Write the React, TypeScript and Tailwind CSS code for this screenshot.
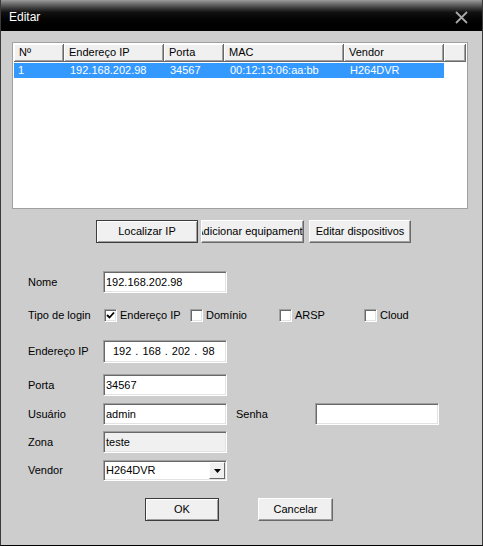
import type { FC, ReactNode } from 'react';

const font = { fontFamily: '"Liberation Sans", Arial, sans-serif' };

const sunken =
    'border border-t-[#a0a0a0] border-l-[#a0a0a0] border-r-white border-b-white shadow-[inset_1px_1px_0_#696969,inset_-1px_-1px_0_#e3e3e3]';

type ButtonProps = { label: string; w: string; focused?: boolean };

const Button: FC<ButtonProps> = ({ label, w, focused }) => (
    <div
        className={`flex h-[23px] ${w} items-center justify-center overflow-hidden bg-[#f0f0f0] text-[11px] text-black ${
            focused
                ? 'border border-[#3c3c3c] shadow-[inset_1px_1px_0_white,inset_-1px_-1px_0_#a0a0a0]'
                : 'border border-t-white border-l-white border-r-[#696969] border-b-[#696969] shadow-[inset_-1px_-1px_0_#a0a0a0]'
        }`}
    >
        <span className="shrink-0 whitespace-nowrap">{label}</span>
    </div>
);

const Field: FC<{ value?: string; w?: string; gray?: boolean; children?: ReactNode }> = ({
    value,
    w = 'w-[124px]',
    gray,
    children,
}) => (
    <div
        className={`flex h-full ${w} items-center pl-[2px] text-[11px] text-black ${sunken} ${
            gray ? 'bg-[#f0f0f0]' : 'bg-white'
        }`}
    >
        {children ?? value}
    </div>
);

const Check: FC<{ label: string; checked?: boolean; w: string }> = ({ label, checked, w }) => (
    <div className={`flex ${w} items-center gap-[3px]`}>
        <div className={`flex h-[13px] w-[13px] items-center justify-center bg-white ${sunken}`}>
            {checked && (
                <svg width="9" height="9" viewBox="0 0 9 9">
                    <path d="M1 4 L3.5 6.5 L8 1.5" stroke="#000" strokeWidth="1.8" fill="none" />
                </svg>
            )}
        </div>
        <span className="text-[11px]">{label}</span>
    </div>
);

const Row: FC<{ label: string; h: string; mt: string; children: ReactNode }> = ({
    label,
    h,
    mt,
    children,
}) => (
    <div className={`flex ${h} ${mt} items-center`}>
        <span className="w-[76px] pl-px text-[11px]">{label}</span>
        {children}
    </div>
);

const cols = [
    { title: 'Nº', w: 'w-[50px]', value: '1' },
    { title: 'Endereço IP', w: 'w-[100px]', value: '192.168.202.98' },
    { title: 'Porta', w: 'w-[60px]', value: '34567' },
    { title: 'MAC', w: 'w-[120px]', value: '00:12:13:06:aa:bb' },
    { title: 'Vendor', w: 'w-[100px]', value: 'H264DVR' },
];

export default function App() {
    return (
        <div
            className="flex h-[546px] w-[483px] flex-col overflow-hidden border-x border-b border-x-[#3a3a3a] border-b-black bg-[#cdcdcd] text-black"
            style={font}
        >
            <div className="flex h-[31px] shrink-0 items-center justify-between bg-gradient-to-b from-[#9c9c9c] via-[#111] via-[40%] to-black pl-[8px] pr-[14px] pt-[3px]">
                <span className="text-[12px] text-white">Editar</span>
                <svg width="13" height="13" viewBox="0 0 13 13">
                    <path d="M1 1 L12 12 M12 1 L1 12" stroke="#a8a8a8" strokeWidth="1.8" />
                </svg>
            </div>

            <div className="ml-[11px] mt-[11px] h-[167px] w-[456px] border border-[#a0a0a0] bg-white p-px">
                <div className="flex h-[18px]">
                    {cols.map((c) => (
                        <div
                            key={c.title}
                            className={`${c.w} flex items-center border-r border-b border-[#696969] bg-[#f0f0f0] pl-[5px] text-[11px] shadow-[inset_1px_1px_0_white,inset_-1px_-1px_0_#a0a0a0]`}
                        >
                            {c.title}
                        </div>
                    ))}
                    <div className="flex-1 border-r border-b border-[#696969] bg-[#f0f0f0] shadow-[inset_1px_1px_0_white,inset_-1px_-1px_0_#a0a0a0]" />
                </div>
                <div className="mt-px flex h-[15px] w-[430px] bg-[#3399ff] text-white">
                    {cols.map((c) => (
                        <div key={c.title} className={`${c.w} flex items-center pl-[6px] text-[11px] first:pl-[4px]`}>
                            {c.value}
                        </div>
                    ))}
                </div>
            </div>

            <div className="ml-[95px] mt-[11px] flex h-[23px] gap-[3px]">
                <Button label="Localizar IP" w="w-[102px]" focused />
                <Button label="Adicionar equipamento" w="w-[103px]" />
                <div className="ml-[2px]">
                    <Button label="Editar dispositivos" w="w-[102px]" />
                </div>
            </div>

            <div className="ml-[26px] flex flex-col">
                <Row label="Nome" h="h-[22px]" mt="mt-[28px]">
                    <Field value="192.168.202.98" />
                </Row>
                <Row label="Tipo de login" h="h-[18px]" mt="mt-[13px]">
                    <div className="ml-px flex items-center">
                        <Check label="Endereço IP" checked w="w-[86px]" />
                        <Check label="Domínio" w="w-[89px]" />
                        <Check label="ARSP" w="w-[85px]" />
                        <Check label="Cloud" w="w-[70px]" />
                    </div>
                </Row>
                <Row label="Endereço IP" h="h-[23px]" mt="mt-[16px]">
                    <Field>
                        <div className="ml-[7px] flex items-center text-[11px]">
                            <span>192</span>
                            <span className="mx-[4px]">.</span>
                            <span>168</span>
                            <span className="mx-[4px]">.</span>
                            <span>202</span>
                            <span className="mx-[4px]">.</span>
                            <span className="ml-px">98</span>
                        </div>
                    </Field>
                </Row>
                <Row label="Porta" h="h-[22px]" mt="mt-[11px]">
                    <Field value="34567" />
                </Row>
                <Row label="Usuário" h="h-[22px]" mt="mt-[7px]">
                    <Field value="admin" />
                    <span className="ml-[9px] w-[79px] text-[11px]">Senha</span>
                    <Field />
                </Row>
                <Row label="Zona" h="h-[22px]" mt="mt-[6px]">
                    <Field value="teste" gray />
                </Row>
                <Row label="Vendor" h="h-[21px]" mt="mt-[7px]">
                    <div className={`flex h-full w-[124px] items-center justify-between bg-white pl-[2px] pr-px text-[11px] ${sunken}`}>
                        <span>H264DVR</span>
                        <div className="flex h-[17px] w-[16px] items-center justify-center border border-t-white border-l-white border-r-[#696969] border-b-[#696969] bg-[#f0f0f0]">
                            <svg width="7" height="4" viewBox="0 0 7 4">
                                <path d="M0 0 H7 L3.5 4 Z" fill="#000" />
                            </svg>
                        </div>
                    </div>
                </Row>
            </div>

            <div className="ml-[144px] mt-[17px] flex gap-[39px]">
                <Button label="OK" w="w-[74px]" focused />
                <Button label="Cancelar" w="w-[75px]" />
            </div>
        </div>
    );
}
